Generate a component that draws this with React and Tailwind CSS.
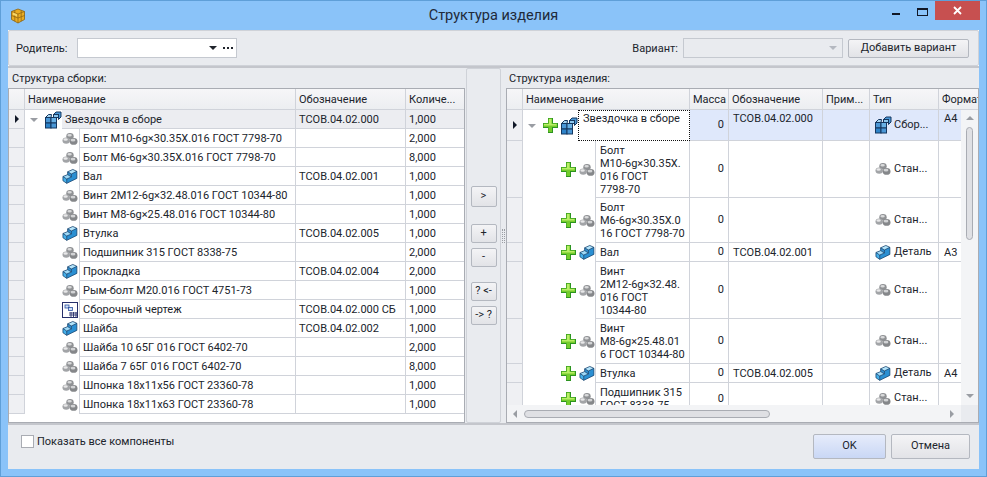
import React from 'react';

const leftRows = [
  ['Болт М10-6g×30.35Х.016 ГОСТ 7798-70', '', '2,000', 'std'],
  ['Болт М6-6g×30.35Х.016 ГОСТ 7798-70', '', '8,000', 'std'],
  ['Вал', 'ТСОВ.04.02.001', '1,000', 'part'],
  ['Винт 2М12-6g×32.48.016 ГОСТ 10344-80', '', '1,000', 'std'],
  ['Винт М8-6g×25.48.016 ГОСТ 10344-80', '', '1,000', 'std'],
  ['Втулка', 'ТСОВ.04.02.005', '1,000', 'part'],
  ['Подшипник 315 ГОСТ 8338-75', '', '2,000', 'std'],
  ['Прокладка', 'ТСОВ.04.02.004', '2,000', 'part'],
  ['Рым-болт М20.016 ГОСТ 4751-73', '', '1,000', 'std'],
  ['Сборочный чертеж', 'ТСОВ.04.02.000 СБ', '1,000', 'draw'],
  ['Шайба', 'ТСОВ.04.02.002', '1,000', 'part'],
  ['Шайба 10 65Г 016 ГОСТ 6402-70', '', '2,000', 'std'],
  ['Шайба 7 65Г 016 ГОСТ 6402-70', '', '8,000', 'std'],
  ['Шпонка 18х11х56 ГОСТ 23360-78', '', '1,000', 'std'],
  ['Шпонка 18х11х63 ГОСТ 23360-78', '', '1,000', 'std'],
];

const rightRows = [
  { h: 'h-[57px]', lines: ['Болт', 'М10-6g×30.35Х.', '016 ГОСТ', '7798-70'], type: 'std' },
  { h: 'h-[45px]', lines: ['Болт', 'М6-6g×30.35Х.0', '16 ГОСТ 7798-70'], type: 'std' },
  { h: 'h-[19px]', lines: ['Вал'], code: 'ТСОВ.04.02.001', type: 'part', format: 'А3' },
  { h: 'h-[57px]', lines: ['Винт', '2М12-6g×32.48.', '016 ГОСТ', '10344-80'], type: 'std' },
  { h: 'h-[45px]', lines: ['Винт', 'М8-6g×25.48.01', '6 ГОСТ 10344-80'], type: 'std' },
  { h: 'h-[19px]', lines: ['Втулка'], code: 'ТСОВ.04.02.005', type: 'part', format: 'А4' },
  { h: 'h-[32px]', lines: ['Подшипник 315', 'ГОСТ 8338-75'], type: 'std' },
];

function StdIcon() {
  return (
    <svg width="16" height="14" viewBox="0 0 16 14" className="shrink-0">
      <ellipse cx="8" cy="4.2" rx="3.7" ry="3.2" fill="#8f9194" />
      <ellipse cx="4.2" cy="8.6" rx="3.7" ry="3.2" fill="#a2a4a7" />
      <ellipse cx="11.6" cy="9.4" rx="3.9" ry="3.4" fill="#85878a" />
      <ellipse cx="7.6" cy="3.2" rx="2.2" ry="1.3" fill="#d9dadb" />
      <ellipse cx="3.6" cy="7.5" rx="2.2" ry="1.3" fill="#e8e8e9" />
      <ellipse cx="11" cy="8.2" rx="2.4" ry="1.4" fill="#d2d3d5" />
    </svg>
  );
}

function PartIcon() {
  return (
    <svg width="16" height="17" viewBox="0 0 17 17" className="shrink-0">
      <path d="M6 3.5 L11.5 1 L15.8 3 L10 5.8 Z" fill="#b4e4fa" />
      <path d="M6 3.5 L10 5.8 L10 9 L6 7 Z" fill="#2f8fd0" />
      <path d="M1 8.5 L6 6.5 L10 9 L5 11.2 Z" fill="#a0daf7" />
      <path d="M1 8.5 L5 11.2 L5 15.8 L1 13 Z" fill="#45b0ea" />
      <path d="M5 11.2 L10 9 L10 5.8 L15.8 3 L15.8 10.5 L5 15.8 Z" fill="#2a8fd2" />
      <path d="M1 8.5 L6 6.5 L6 3.5 L11.5 1 L15.8 3 L15.8 10.5 L5 15.8 L1 13 Z M5 11.2 L10 9 L10 5.8 L15.8 3 M10 5.8 L6 3.5 M5 11.2 L5 15.8 M5 11.2 L1 8.5 M6 6.5 L10 9" fill="none" stroke="#123f6b" strokeWidth="0.8" strokeLinejoin="round" />
    </svg>
  );
}

function AsmIcon() {
  return (
    <svg width="18" height="18" viewBox="0 0 18 18" className="shrink-0">
      <g stroke="#15375f" strokeWidth="1">
        <rect x="1.5" y="6.5" width="5.5" height="5.5" fill="#4a97d6" />
        <rect x="7" y="6.5" width="5.5" height="5.5" fill="#68b1e6" />
        <rect x="1.5" y="12" width="5.5" height="5" fill="#2d83c9" />
        <rect x="7" y="12" width="5.5" height="5" fill="#4a97d6" />
        <path d="M1.5 6.5 L4.5 3.5 L7.5 3.5 L7 6.5 Z" fill="#a7d6f4" />
        <path d="M9.5 3.5 L12 1 L17 1 L17 6 L14.5 8.5 L14.5 3.5 Z" fill="#4a97d6" />
        <rect x="9.5" y="3.5" width="5" height="3" fill="#8cc7ee" />
      </g>
    </svg>
  );
}

function DrawIcon() {
  return (
    <svg width="16" height="16" viewBox="0 0 16 16" className="shrink-0">
      <rect x="0.5" y="0.5" width="15" height="15" fill="#fff" stroke="#27306b" />
      <rect x="3" y="3" width="4" height="3" fill="#cfe0f5" stroke="#2a4fa0" strokeWidth="0.8" />
      <rect x="6.5" y="5.5" width="4" height="3" fill="#cfe0f5" stroke="#2a4fa0" strokeWidth="0.8" />
      <path d="M7 11 H15 M7 13 H15 M9 10 V15 M11.5 10 V15 M14 10 V15" stroke="#27306b" strokeWidth="0.9" />
    </svg>
  );
}

function PlusIcon() {
  return (
    <svg width="15" height="15" viewBox="0 0 15 15" className="shrink-0">
      <path d="M5 0 H10 V5 H15 V10 H10 V15 H5 V10 H0 V5 H5 Z" fill="#2c9420" />
      <path d="M5.5 0.5 H9 V5.5 H14 V9 H9 V14 H5.5 V9 H0.5 V5.5 H5.5 Z" fill="#74cc2c" />
      <path d="M6 1 H8.5 V6 H13.5 V7.5 H6 V6 Z M1 6 H6 V7.5 H1 Z" fill="#b9ee66" />
    </svg>
  );
}

function RowIcon({ type }) {
  if (type === 'part') return <PartIcon />;
  if (type === 'asm') return <AsmIcon />;
  if (type === 'draw') return <DrawIcon />;
  return <StdIcon />;
}

function Arrow() {
  return <span className="w-0 h-0 border-y-[4px] border-y-transparent border-l-[4px] border-l-[#111827]" />;
}

function TreeArrow() {
  return <span className="w-0 h-0 shrink-0 border-x-[4px] border-x-transparent border-t-[4px] border-t-[#9a9da3]" />;
}

function HeaderCell({ className = '', children }) {
  return (
    <div className={`h-[20px] shrink-0 flex items-center pl-[3px] pt-[2px] border-r border-[#d0d3da] whitespace-nowrap overflow-hidden ${className}`}>
      {children}
    </div>
  );
}

function Btn({ className = '', children }) {
  return (
    <button className={`flex items-center justify-center rounded-[2px] border border-[#b4b8c0] bg-gradient-to-b text-[#20242c] ${className}`}>
      {children}
    </button>
  );
}

const grayBtn = 'from-[#f4f4f6] to-[#e2e3e7]';

function LeftGrid() {
  return (
    <div className="flex-1 min-h-0 bg-white border border-[#a9acb3]">
      <div className="flex h-[21px] bg-gradient-to-b from-[#f6f6f8] to-[#eceef1] border-b border-[#d0d3da]">
        <HeaderCell className="w-[16px]" />
        <HeaderCell className="w-[271px]">Наименование</HeaderCell>
        <HeaderCell className="w-[110px]">Обозначение</HeaderCell>
        <HeaderCell className="flex-1 border-r-0">Количе...</HeaderCell>
      </div>
      <div className="flex h-[19px]">
        <div className="w-[16px] shrink-0 bg-[#eff0f3] border-r border-b border-[#d0d3da] flex items-center justify-center">
          <Arrow />
        </div>
        <div className="w-[37px] shrink-0 flex items-center pl-[5px] gap-[6px]">
          <TreeArrow />
          <AsmIcon />
        </div>
        <div className="flex-1 flex bg-[#ecedf1] border-b border-[#d0d3da]">
          <div className="w-[234px] shrink-0 flex items-center pl-[3px] pt-[2px] border-r border-[#d0d3da]">Звездочка в сборе</div>
          <div className="w-[110px] shrink-0 flex items-center pl-[3px] pt-[2px] border-r border-[#d0d3da]">ТСОВ.04.02.000</div>
          <div className="flex-1 flex items-center pl-[3px] pt-[2px]">1,000</div>
        </div>
      </div>
      {leftRows.map((row) => (
        <div key={row[0]} className="flex h-[19px]">
          <div className="w-[16px] shrink-0 bg-[#eff0f3] border-r border-b border-[#d0d3da]" />
          <div className="w-[54px] shrink-0 flex items-center justify-end pr-[1px]">
            <RowIcon type={row[3]} />
          </div>
          <div className="w-[217px] shrink-0 flex items-center pl-[3px] pt-[2px] border-l border-r border-b border-[#d0d3da] whitespace-nowrap">{row[0]}</div>
          <div className="w-[110px] shrink-0 flex items-center pl-[3px] pt-[2px] border-r border-b border-[#d0d3da] whitespace-nowrap">{row[1]}</div>
          <div className="flex-1 flex items-center pl-[3px] pt-[2px] border-b border-[#d0d3da]">{row[2]}</div>
        </div>
      ))}
    </div>
  );
}

function RightGrid() {
  return (
    <div className="flex-1 min-h-0 flex flex-col bg-white border border-[#a9acb3] overflow-hidden">
      <div className="flex h-[21px] shrink-0 bg-gradient-to-b from-[#f6f6f8] to-[#eceef1] border-b border-[#d0d3da]">
        <HeaderCell className="w-[16px]" />
        <HeaderCell className="w-[167px]">Наименование</HeaderCell>
        <HeaderCell className="w-[39px]">Масса</HeaderCell>
        <HeaderCell className="w-[94px]">Обозначение</HeaderCell>
        <HeaderCell className="w-[47px]">Прим...</HeaderCell>
        <HeaderCell className="w-[69px]">Тип</HeaderCell>
        <HeaderCell className="w-[50px] border-r-0">Формат</HeaderCell>
      </div>
      <div className="flex-1 min-h-0 flex">
        <div className="flex-1 min-w-0 overflow-hidden">
          <div className="flex h-[31px]">
            <div className="w-[16px] shrink-0 bg-[#eff0f3] border-r border-b border-[#d0d3da] flex items-center justify-center">
              <Arrow />
            </div>
            <div className="w-[55px] shrink-0 flex items-center pl-[5px]">
              <TreeArrow />
              <span className="ml-[7px]"><PlusIcon /></span>
              <span className="ml-[2px]"><AsmIcon /></span>
            </div>
            <div className="w-[112px] shrink-0 bg-white border border-dotted border-[#111] pl-[4px] pt-[1px] leading-[13px]">Звездочка в сборе</div>
            <div className="flex-1 flex bg-[#dfe8fb] border-b border-[#d0d3da]">
              <div className="w-[39px] shrink-0 flex items-center justify-end pr-[4px] pt-[1px] border-r border-[#d0d3da]">0</div>
              <div className="w-[94px] shrink-0 pl-[4px] pt-[2px] leading-[13px] border-r border-[#d0d3da]">ТСОВ.04.02.000</div>
              <div className="w-[47px] shrink-0 border-r border-[#d0d3da]" />
              <div className="w-[69px] shrink-0 flex items-center pl-[4px] gap-[2px] border-r border-[#d0d3da]">
                <AsmIcon />
                <span>Сбор...</span>
              </div>
              <div className="flex-1 pl-[5px] pt-[2px] leading-[13px]">А4</div>
            </div>
          </div>
          {rightRows.map((row) => (
            <div key={row.lines.join()} className={`flex ${row.h}`}>
              <div className="w-[16px] shrink-0 bg-[#eff0f3] border-r border-b border-[#d0d3da]" />
              <div className="w-[72px] shrink-0 flex items-center pl-[38px] gap-[3px]">
                <PlusIcon />
                <RowIcon type={row.type} />
              </div>
              <div className="w-[95px] shrink-0 pl-[4px] pt-[3px] leading-[13px] whitespace-nowrap overflow-hidden border-l border-r border-b border-[#d0d3da]">
                {row.lines.map((line) => (
                  <div key={line}>{line}</div>
                ))}
              </div>
              <div className="w-[39px] shrink-0 flex items-center justify-end pr-[4px] pt-[1px] border-r border-b border-[#d0d3da]">0</div>
              <div className="w-[94px] shrink-0 pl-[4px] pt-[3px] leading-[13px] border-r border-b border-[#d0d3da]">{row.code}</div>
              <div className="w-[47px] shrink-0 border-r border-b border-[#d0d3da]" />
              <div className="w-[69px] shrink-0 flex items-center pl-[4px] gap-[2px] border-r border-b border-[#d0d3da]">
                <span className="w-[18px] flex justify-center"><RowIcon type={row.type} /></span>
                <span>{row.type === 'part' ? 'Деталь' : 'Стан...'}</span>
              </div>
              <div className="flex-1 pl-[5px] pt-[3px] leading-[13px] border-b border-[#d0d3da]">{row.format}</div>
            </div>
          ))}
        </div>
        <div className="w-[17px] shrink-0 bg-[#f3f4f6] flex flex-col items-center pt-[6px] pb-[7px]">
          <span className="w-0 h-0 border-x-[4px] border-x-transparent border-b-[4px] border-b-[#9a9da3]" />
          <span className="w-[7px] h-[113px] mt-[7px] rounded-[4px] border border-[#a9acb3] bg-[#dfe0e4]" />
          <span className="mt-auto w-0 h-0 border-x-[4px] border-x-transparent border-t-[4px] border-t-[#9a9da3]" />
        </div>
      </div>
      <div className="h-[17px] shrink-0 flex">
        <div className="flex-1 flex items-center bg-[#f3f4f6] pl-[6px] pr-[7px]">
          <span className="w-0 h-0 border-y-[4px] border-y-transparent border-r-[4px] border-r-[#9a9da3]" />
          <span className="ml-[7px] w-[246px] h-[8px] rounded-[4px] border border-[#a9acb3] bg-[#dfe0e4]" />
          <span className="ml-auto w-0 h-0 border-y-[4px] border-y-transparent border-l-[4px] border-l-[#9a9da3]" />
        </div>
        <div className="w-[17px] shrink-0 bg-[#e9ebef]" />
      </div>
    </div>
  );
}

export default function App() {
  return (
    <div
      className="w-[987px] h-[477px] flex flex-col bg-[#8ac3f9] border border-[#5f9fd8] text-[11px] text-[#20242c]"
      style={{ fontFamily: 'Roboto, "Noto Sans", sans-serif' }}
    >
      <div className="h-[29px] shrink-0 flex">
        <div className="w-[103px] shrink-0 flex items-center pl-[9px]">
          <svg width="16" height="16" viewBox="0 0 16 16" className="shrink-0">
            <path d="M8 1 L14.5 3.5 L14.5 11.5 L8 15 L1.5 11.5 L1.5 3.5 Z" fill="#eaac22" stroke="#8a6212" strokeWidth="0.8" />
            <path d="M1.5 3.5 L8 6 L14.5 3.5 M8 6 L8 15 M1.5 7.5 L8 10 L14.5 7.5 M4.8 2.3 L4.8 13.2 M11.2 2.3 L11.2 13.2" fill="none" stroke="#8a6212" strokeWidth="0.7" />
            <path d="M3 4.6 L7 6.2 L7 8.4 L3 6.8 Z" fill="#f7d76a" />
          </svg>
        </div>
        <div className="flex-1 flex items-center justify-center text-[14.5px] text-[#1f2a3a]">Структура изделия</div>
        <div className="w-[103px] shrink-0 flex items-start pr-[6px]">
          <div className="w-[26px] h-[19px] flex justify-center pt-[12px]">
            <span className="w-[8px] h-[2px] bg-[#111827]" />
          </div>
          <div className="w-[26px] h-[19px] flex justify-center pt-[7px]">
            <span className="w-[11px] h-[8px] border border-t-2 border-[#111827]" />
          </div>
          <div className="w-[45px] h-[19px] bg-[#c75050] flex items-center justify-center">
            <svg width="9" height="9" viewBox="0 0 9 9">
              <path d="M1 1 L8 8 M8 1 L1 8" stroke="#fff" strokeWidth="1.8" />
            </svg>
          </div>
        </div>
      </div>

      <div className="flex-1 min-h-0 mx-[7px] mb-[7px] flex flex-col bg-white">
        <div className="h-[36px] shrink-0 flex items-center bg-[#e9ebef] border border-[#cfd2d8] rounded-[2px] pl-[7px] pr-[9px]">
          <span className="w-[61px] shrink-0 pt-[2px]">Родитель:</span>
          <div className="w-[160px] h-[20px] flex items-center justify-end bg-white border border-[#c5c9d0] pr-[3px] gap-[6px]">
            <span className="w-0 h-0 border-x-[4px] border-x-transparent border-t-[4px] border-t-[#20242c]" />
            <span className="flex gap-[2px]">
              <span className="w-[2px] h-[2px] bg-[#20242c]" />
              <span className="w-[2px] h-[2px] bg-[#20242c]" />
              <span className="w-[2px] h-[2px] bg-[#20242c]" />
            </span>
          </div>
          <span className="ml-auto mr-[5px] pt-[2px]">Вариант:</span>
          <div className="w-[160px] h-[20px] flex items-center justify-end bg-[#e9ebef] border border-[#c5c9d0] pr-[5px]">
            <span className="w-0 h-0 border-x-[4px] border-x-transparent border-t-[4px] border-t-[#b4b8c0]" />
          </div>
          <Btn className={`ml-[5px] w-[121px] h-[19px] ${grayBtn}`}>Добавить вариант</Btn>
        </div>

        <div className="flex-1 min-h-0 flex border-t-2 border-[#c4c6cc] bg-[#e9ebef]">
          <div className="w-[457px] shrink-0 flex flex-col">
            <div className="h-[20px] shrink-0 flex items-center pl-[4px] pt-[2px]">Структура сборки:</div>
            <LeftGrid />
          </div>
          <div className="w-[35px] ml-[1px] shrink-0 flex flex-col items-center border border-[#cfd2d8] rounded-[2px] pt-[117px]">
            <Btn className={`w-[26px] h-[21px] ${grayBtn}`}>&gt;</Btn>
            <Btn className={`w-[26px] h-[19px] mt-[17px] ${grayBtn}`}>+</Btn>
            <Btn className={`w-[26px] h-[19px] mt-[5px] ${grayBtn}`}>-</Btn>
            <Btn className={`w-[26px] h-[19px] mt-[15px] ${grayBtn}`}>? &lt;-</Btn>
            <Btn className={`w-[26px] h-[19px] mt-[5px] ${grayBtn}`}>-&gt; ?</Btn>
          </div>
          <div className="w-[5px] shrink-0 flex items-center justify-center pb-[20px]">
            <span className="w-[3px] h-[14px] border-x border-dotted border-[#9a9da3]" />
          </div>
          <div className="flex-1 min-w-0 flex flex-col">
            <div className="h-[20px] shrink-0 flex items-center pl-[3px] pt-[2px]">Структура изделия:</div>
            <RightGrid />
          </div>
        </div>

        <div className="h-[46px] shrink-0 flex items-start bg-[#e9ebef] border-t-2 border-[#c4c6cc] pt-[9px] pl-[13px] pr-[9px]">
          <span className="w-[13px] h-[13px] mt-[1px] bg-white border border-[#a9acb3]" />
          <span className="ml-[3px] leading-[15px]">Показать все компоненты</span>
          <Btn className="ml-auto w-[73px] h-[25px] from-[#e6ecfb] to-[#c9d7f5]">OK</Btn>
          <Btn className={`ml-[5px] w-[79px] h-[25px] ${grayBtn}`}>Отмена</Btn>
        </div>
      </div>
    </div>
  );
}
